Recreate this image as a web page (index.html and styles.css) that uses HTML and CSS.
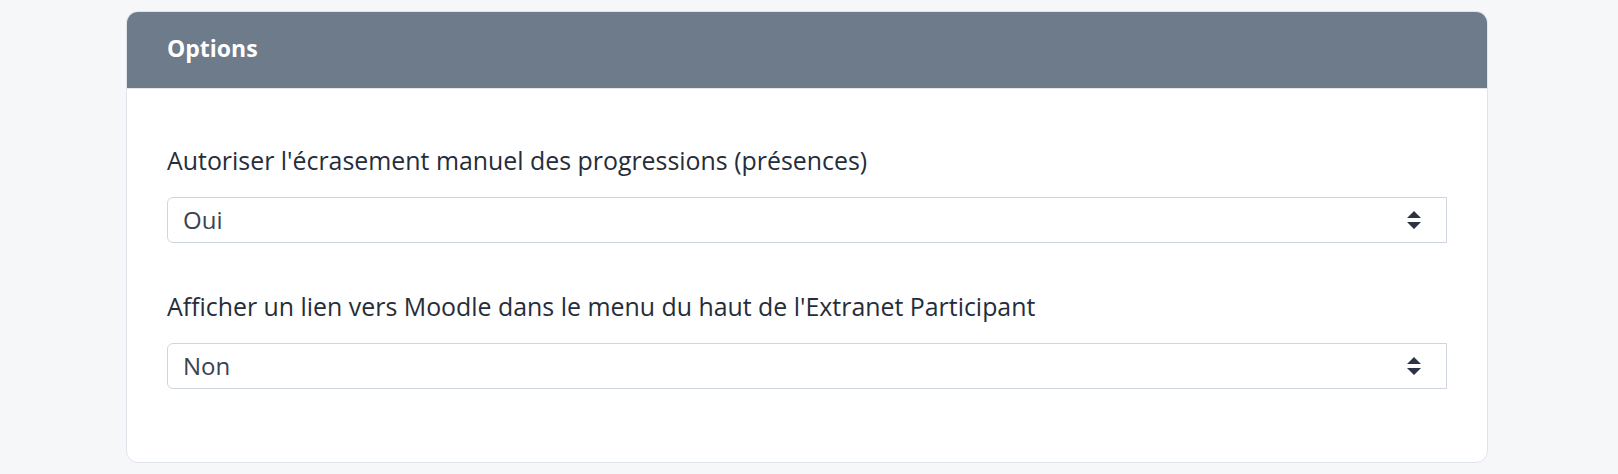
FILE: index.html
```html
<!DOCTYPE html>
<html lang="fr">
<head>
  <meta charset="UTF-8">
  <meta name="viewport" content="width=device-width, initial-scale=1.0">
  <title>Options</title>
  <link rel="stylesheet" href="styles.css">
</head>
<body>
  <div class="card">
    <div class="card-header">Options</div>
    <div class="card-body">
      <div class="field">
        <label for="override">Autoriser l'écrasement manuel des progressions (présences)</label>
        <div class="select-wrap">
          <select id="override">
            <option>Oui</option>
            <option>Non</option>
          </select>
          <svg class="arrows" width="16" height="20" viewBox="0 0 16 20"><path d="M8 1 L15 8 H1 Z M1 12 H15 L8 19 Z" fill="#2b3344"/></svg>
        </div>
      </div>
      <div class="field">
        <label for="moodle">Afficher un lien vers Moodle dans le menu du haut de l'Extranet Participant</label>
        <div class="select-wrap">
          <select id="moodle">
            <option>Non</option>
            <option>Oui</option>
          </select>
          <svg class="arrows" width="16" height="20" viewBox="0 0 16 20"><path d="M8 1 L15 8 H1 Z M1 12 H15 L8 19 Z" fill="#2b3344"/></svg>
        </div>
      </div>
    </div>
  </div>
</body>
</html>
```

FILE: styles.css
```css
body {
  margin: 0;
  padding: 11px 0 0;
  background: #f6f7f9;
  font-family: "Open Sans", "Noto Sans", sans-serif;
  color: #262d3a;
}
.card {
  width: 1362px;
  margin-left: 126px;
  box-sizing: border-box;
  background: #fff;
  border: 1px solid #dfe3ea;
  border-radius: 12px;
  overflow: hidden;
}
.card-header {
  background: #6e7b8b;
  color: #fff;
  font-size: 23px;
  font-weight: bold;
  height: 76px;
  line-height: 73px;
  padding-left: 40px;
  border-bottom: 1px solid #e3e7ee;
}
.card-body {
  padding: 53px 40px 73px;
}
.field + .field {
  margin-top: 45px;
}
.field label {
  display: block;
  font-size: 24.9px;
  line-height: 36.75px;
  margin-bottom: 18px;
}
.select-wrap {
  position: relative;
}
.select-wrap select {
  appearance: none;
  -webkit-appearance: none;
  width: 100%;
  height: 46px;
  box-sizing: border-box;
  border: 1px solid #cfd5df;
  border-radius: 6px 0 0 6px;
  background: #fff;
  padding: 0 15px;
  font-family: inherit;
  font-size: 24px;
  color: #3b4252;
}
.arrows {
  position: absolute;
  right: 25px;
  top: 13px;
  pointer-events: none;
}
```
